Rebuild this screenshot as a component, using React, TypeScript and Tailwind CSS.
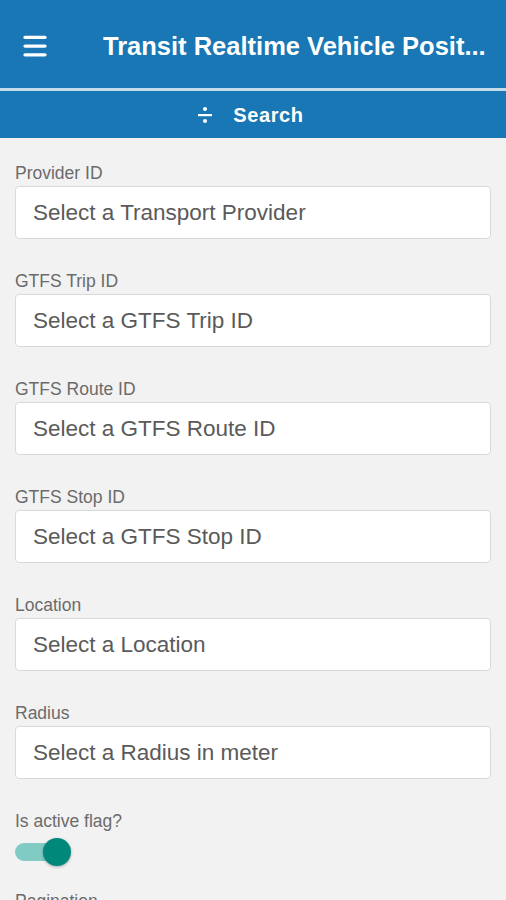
import { Menu } from 'lucide-react';

// ─── Fields ───────────────────────────────────────────────────────────────────

const FIELDS = [
  { label: 'Provider ID', placeholder: 'Select a Transport Provider' },
  { label: 'GTFS Trip ID', placeholder: 'Select a GTFS Trip ID' },
  { label: 'GTFS Route ID', placeholder: 'Select a GTFS Route ID' },
  { label: 'GTFS Stop ID', placeholder: 'Select a GTFS Stop ID' },
  { label: 'Location', placeholder: 'Select a Location' },
  { label: 'Radius', placeholder: 'Select a Radius in meter' },
];

function Field({ label, placeholder }: { label: string; placeholder: string }) {
  return (
    <div className="flex flex-col">
      <label className="text-[17.5px] leading-[18px] text-[#6b6b6b] mb-[4px]">{label}</label>
      <div className="h-[53px] flex items-center px-[17px] bg-white border border-[#d9d9d9] rounded-[4px]">
        <span className="text-[22.5px] text-[#5a5a5a]">{placeholder}</span>
      </div>
    </div>
  );
}

export default function App() {
  return (
    <div className="h-[900px] overflow-hidden bg-[#f2f2f2] font-['Liberation_Sans',Arial,sans-serif]">
      {/* ── Header ── */}
      <header className="h-[88px] bg-[#1877b4] flex items-center pl-[20px] pr-[16px] pt-[4px]">
        <Menu size={30} strokeWidth={2.6} className="text-white shrink-0" />
        <h1 className="ml-[53px] text-[25.5px] font-bold text-white whitespace-nowrap">
          Transit Realtime Vehicle Posit...
        </h1>
      </header>
      <div className="h-[3px] bg-[#c7dcea]" />
      <div className="h-[47px] bg-[#1877b4] flex items-center justify-center gap-[21px] pr-[4px]">
        <svg width="14" height="18" viewBox="0 0 14 18" className="text-white">
          <circle cx="7" cy="3" r="2" fill="currentColor" />
          <rect x="0" y="8" width="14" height="2.2" fill="currentColor" />
          <circle cx="7" cy="15" r="2" fill="currentColor" />
        </svg>
        <span className="text-[20px] font-bold text-white tracking-[0.6px]">Search</span>
      </div>

      {/* ── Form ── */}
      <main className="px-[15px] pt-[26px] flex flex-col gap-[33px]">
        {FIELDS.map(f => (
          <Field key={f.label} {...f} />
        ))}
        <div className="flex flex-col">
          <label className="text-[17.5px] leading-[18px] text-[#6b6b6b] mb-[7px]">Is active flag?</label>
          <div className="relative w-[56px] h-[30px] flex items-center">
            <div className="w-[48px] h-[18px] rounded-full bg-[#80cbc4]" />
            <div className="absolute right-0 top-[1px] w-[28px] h-[28px] rounded-full bg-[#00897b] shadow-[0_1px_3px_rgba(0,0,0,0.3)]" />
          </div>
        </div>
        <label className="text-[17.5px] leading-[18px] text-[#6b6b6b] -mt-[8px]">Pagination</label>
      </main>
    </div>
  );
}
